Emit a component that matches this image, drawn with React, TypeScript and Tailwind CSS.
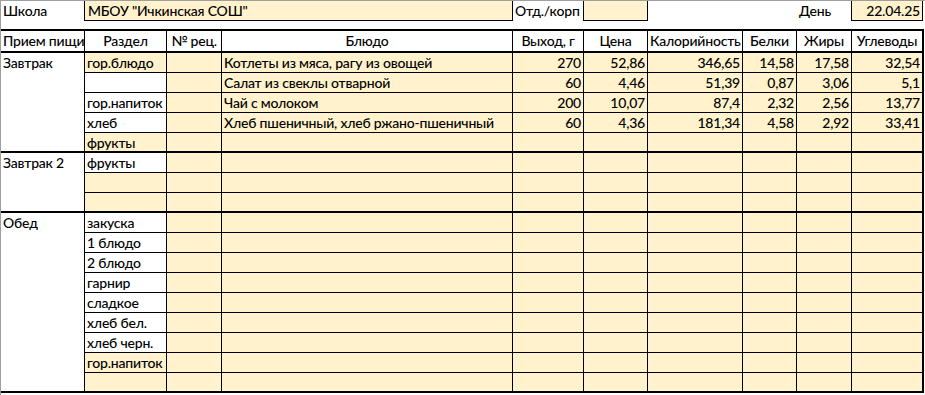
import React from "react";

type Row = {
  section: string;
  fill?: boolean;
  dish?: string;
  values?: string[];
};

type Group = { meal: string; rows: Row[] };

const groups: Group[] = [
  {
    meal: "Завтрак",
    rows: [
      {
        section: "гор.блюдо",
        fill: true,
        dish: "Котлеты из мяса, рагу из овощей",
        values: ["270", "52,86", "346,65", "14,58", "17,58", "32,54"],
      },
      {
        section: "",
        dish: "Салат из свеклы отварной",
        values: ["60", "4,46", "51,39", "0,87", "3,06", "5,1"],
      },
      {
        section: "гор.напиток",
        dish: "Чай с молоком",
        values: ["200", "10,07", "87,4", "2,32", "2,56", "13,77"],
      },
      {
        section: "хлеб",
        dish: "Хлеб пшеничный, хлеб ржано-пшеничный",
        values: ["60", "4,36", "181,34", "4,58", "2,92", "33,41"],
      },
      { section: "фрукты", fill: true },
    ],
  },
  {
    meal: "Завтрак 2",
    rows: [
      { section: "фрукты" },
      { section: "", fill: true },
      { section: "", fill: true },
    ],
  },
  {
    meal: "Обед",
    rows: [
      { section: "закуска" },
      { section: "1 блюдо" },
      { section: "2 блюдо" },
      { section: "гарнир" },
      { section: "сладкое" },
      { section: "хлеб бел." },
      { section: "хлеб черн." },
      { section: "гор.напиток", fill: true },
      { section: "", fill: true },
    ],
  },
];

// widths of the value columns, last one carries the thick right edge
const valueCols = [
  "w-[71px] border-r",
  "w-[64px] border-r",
  "w-[95px] border-r",
  "w-[54px] border-r",
  "w-[55px] border-r",
  "w-[72px] border-r-2",
];

const headers = ["Выход, г", "Цена", "Калорийность", "Белки", "Жиры", "Углеводы"];

const cell = "h-full shrink-0 overflow-hidden whitespace-nowrap border-black px-[2px]";

const TableRow: React.FC<{ row: Row; last: boolean }> = ({ row, last }) => (
  <div className={`flex ${last ? "h-[18px]" : "h-[20px] border-b border-black"}`}>
    <div className={`${cell} w-[82px] border-r ${row.fill ? "bg-[#fff2cc]" : "bg-white"}`}>
      {row.section}
    </div>
    <div className={`${cell} w-[55px] border-r bg-[#fff2cc]`}></div>
    <div className={`${cell} w-[291px] border-r bg-[#fff2cc]`}>{row.dish}</div>
    {valueCols.map((w, i) => (
      <div key={i} className={`${cell} ${w} bg-[#fff2cc] text-right`}>
        {row.values?.[i]}
      </div>
    ))}
  </div>
);

export default function App() {
  return (
    <div className="h-[395px] w-[925px] overflow-hidden border-l border-t border-[#9e9e9e] bg-white font-[Lato,'Open_Sans',sans-serif] text-[14px] font-medium leading-[19px] tracking-[-0.2px] text-black">
      {/* school line */}
      <div className="flex h-[28px] items-start whitespace-nowrap">
        <div className="h-[20px] w-[83px] shrink-0 px-[2px]">Школа</div>
        <div className="h-[20px] w-[429px] shrink-0 border-x border-b border-black bg-[#fff2cc] px-[3px]">
          МБОУ "Ичкинская СОШ"
        </div>
        <div className="h-[20px] w-[70px] shrink-0 overflow-hidden px-[2px]">Отд./корп</div>
        <div className="h-[20px] w-[65px] shrink-0 border-x border-b border-black bg-[#fff2cc]"></div>
        <div className="h-[20px] w-[149px] shrink-0"></div>
        <div className="h-[20px] w-[54px] shrink-0 px-[2px]">День</div>
        <div className="h-[20px] w-[72px] shrink-0 border-x border-b border-black bg-[#fff2cc] px-[2px] text-right">
          22.04.25
        </div>
      </div>

      {/* header */}
      <div className="flex h-[24px] w-[923px] border-y-2 border-black">
        <div className={`${cell} w-[84px] border-r`}>Прием пищи</div>
        <div className={`${cell} w-[82px] border-r text-center`}>Раздел</div>
        <div className={`${cell} w-[55px] border-r text-center`}>№ рец.</div>
        <div className={`${cell} w-[291px] border-r text-center`}>Блюдо</div>
        {headers.map((h, i) => (
          <div key={h} className={`${cell} ${valueCols[i]} text-center`}>
            {h}
          </div>
        ))}
      </div>

      {groups.map((g) => (
        <div key={g.meal} className="flex w-[923px] border-b-2 border-black">
          <div className="w-[84px] shrink-0 border-r border-black px-[2px]">{g.meal}</div>
          <div className="flex flex-col">
            {g.rows.map((r, i) => (
              <TableRow key={i} row={r} last={i === g.rows.length - 1} />
            ))}
          </div>
        </div>
      ))}
    </div>
  );
}
